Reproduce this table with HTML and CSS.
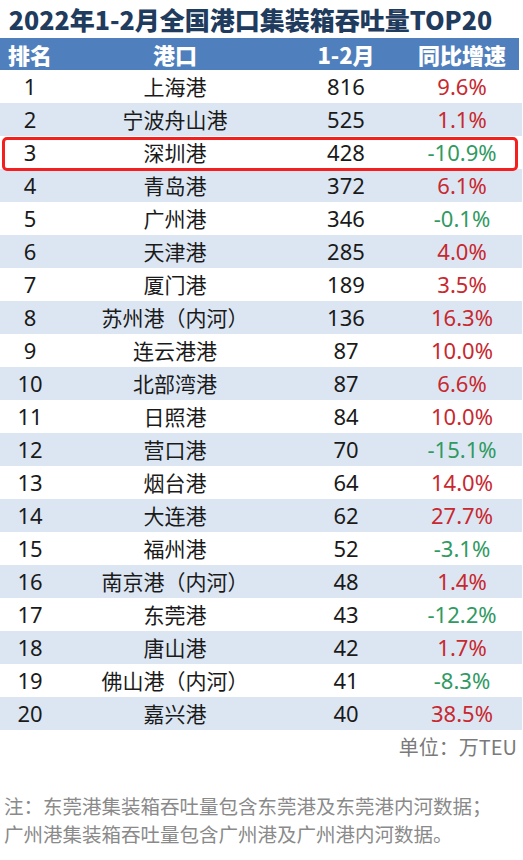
FILE: index.html
```html
<!DOCTYPE html>
<html lang="zh-CN">
<head>
<meta charset="utf-8">
<title>2022年1-2月全国港口集装箱吞吐量TOP20</title>
<link rel="stylesheet" href="styles.css">
</head>
<body>
<div class="page">
  <h1 class="title">2022年1-2月全国港口集装箱吞吐量TOP20</h1>
  <div class="table">
    <div class="row head"><span>排名</span><span>港口</span><span>1-2月</span><span>同比增速</span></div>
    <div class="rows">
      <div class="row"><span>1</span><span>上海港</span><span>816</span><span class="up">9.6%</span></div>
      <div class="row"><span>2</span><span>宁波舟山港</span><span>525</span><span class="up">1.1%</span></div>
      <div class="row mark"><span>3</span><span>深圳港</span><span>428</span><span class="down">-10.9%</span></div>
      <div class="row"><span>4</span><span>青岛港</span><span>372</span><span class="up">6.1%</span></div>
      <div class="row"><span>5</span><span>广州港</span><span>346</span><span class="down">-0.1%</span></div>
      <div class="row"><span>6</span><span>天津港</span><span>285</span><span class="up">4.0%</span></div>
      <div class="row"><span>7</span><span>厦门港</span><span>189</span><span class="up">3.5%</span></div>
      <div class="row"><span>8</span><span>苏州港（内河）</span><span>136</span><span class="up">16.3%</span></div>
      <div class="row"><span>9</span><span>连云港港</span><span>87</span><span class="up">10.0%</span></div>
      <div class="row"><span>10</span><span>北部湾港</span><span>87</span><span class="up">6.6%</span></div>
      <div class="row"><span>11</span><span>日照港</span><span>84</span><span class="up">10.0%</span></div>
      <div class="row"><span>12</span><span>营口港</span><span>70</span><span class="down">-15.1%</span></div>
      <div class="row"><span>13</span><span>烟台港</span><span>64</span><span class="up">14.0%</span></div>
      <div class="row"><span>14</span><span>大连港</span><span>62</span><span class="up">27.7%</span></div>
      <div class="row"><span>15</span><span>福州港</span><span>52</span><span class="down">-3.1%</span></div>
      <div class="row"><span>16</span><span>南京港（内河）</span><span>48</span><span class="up">1.4%</span></div>
      <div class="row"><span>17</span><span>东莞港</span><span>43</span><span class="down">-12.2%</span></div>
      <div class="row"><span>18</span><span>唐山港</span><span>42</span><span class="up">1.7%</span></div>
      <div class="row"><span>19</span><span>佛山港（内河）</span><span>41</span><span class="down">-8.3%</span></div>
      <div class="row"><span>20</span><span>嘉兴港</span><span>40</span><span class="up">38.5%</span></div>
    </div>
  </div>
  <div class="unit">单位：万TEU</div>
  <div class="notes">
    <p>注：东莞港集装箱吞吐量包含东莞港及东莞港内河数据；</p>
    <p>广州港集装箱吞吐量包含广州港及广州港内河数据。</p>
  </div>
</div>
</body>
</html>
```

FILE: styles.css
```css
* { box-sizing: border-box; }
html, body { margin: 0; padding: 0; background: #ffffff; }
body {
  font-family: "Noto Sans CJK SC", "Noto Sans", sans-serif;
  color: #1a1a1a;
}
.page { width: 523px; height: 860px; overflow: hidden; }
.title {
  margin: 0;
  height: 38px;
  padding-right: 22px;
  font-size: 25px;
  line-height: 38px;
  font-weight: 900;
  color: #1f3b5e;
  text-align: center;
  white-space: nowrap;
}
.table { width: 522px; }
.row {
  display: grid;
  grid-template-columns: 60px 230px 112px 120px;
  height: 33px;
  align-items: center;
  font-size: 21px;
  line-height: 33px;
  text-align: center;
  white-space: nowrap;
}
.rows .row span:not(:nth-child(2)) {
  font-family: "Noto Sans", "Noto Sans CJK SC", sans-serif;
  font-size: 22px;
}
.row.head {
  height: 32px;
  line-height: 32px;
  background: #4f7fbc;
  color: #ffffff;
  font-weight: 900;
  font-size: 22px;
  width: 519px;
}
.rows .row:nth-child(even) { background: #dce6f2; }
.row.mark { position: relative; }
.row.mark::after {
  content: "";
  position: absolute;
  top: 1px;
  left: 2px;
  right: 4px;
  bottom: -2px;
  border: 3px solid #f3201f;
  border-radius: 5px;
}
.up { color: #c8282f; }
.down { color: #2f9a62; }
.unit {
  text-align: right;
  padding-right: 6px;
  margin-top: 3px;
  font-size: 20px;
  line-height: 28px;
  color: #7a7a7a;
}
.notes {
  margin-top: 31px;
  padding-left: 4px;
  color: #8a8a8a;
  font-size: 19.5px;
  line-height: 28px;
}
.notes p { margin: 0; white-space: nowrap; }
```
